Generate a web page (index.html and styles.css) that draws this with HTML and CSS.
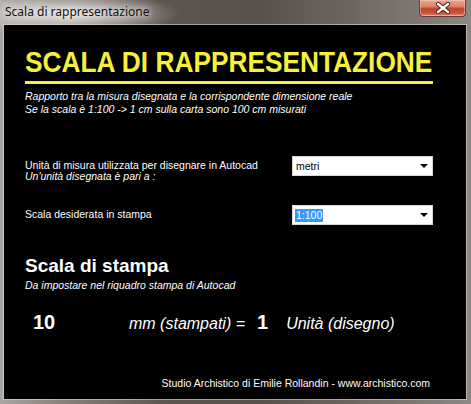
FILE: index.html
```html
<!DOCTYPE html>
<html lang="it">
<head>
<meta charset="utf-8">
<title>Scala di rappresentazione</title>
<link rel="stylesheet" href="styles.css">
</head>
<body>
<div class="window">
  <div class="titlebar">
    <span class="title">Scala di rappresentazione</span>
    <div class="close">
      <svg width="16" height="12" viewBox="0 0 16 12">
        <path d="M3 2 L13 10 M13 2 L3 10" stroke="#4a1a12" stroke-width="4.2" stroke-linecap="round"/>
        <path d="M3 2 L13 10 M13 2 L3 10" stroke="#ffffff" stroke-width="2.4" stroke-linecap="round"/>
      </svg>
    </div>
  </div>
  <div class="client">
    <h1 class="heading"><span class="heading-text">SCALA DI RAPPRESENTAZIONE</span></h1>
    <div class="intro">
      <div>Rapporto tra la misura disegnata e la corrispondente dimensione reale</div>
      <div>Se la scala è 1:100 -&gt; 1 cm sulla carta sono 100 cm misurati</div>
    </div>
    <div class="form">
      <div class="label">
        <div>Unità di misura utilizzata per disegnare in Autocad</div>
        <div class="it">Un'unità disegnata è pari a :</div>
      </div>
      <div class="combo"><span class="combo-value">metri</span><span class="arrow"></span></div>
      <div class="label">
        <div>Scala desiderata in stampa</div>
      </div>
      <div class="combo"><span class="combo-value selected">1:100</span><span class="arrow"></span></div>
    </div>
    <h2 class="subheading">Scala di stampa</h2>
    <div class="note">Da impostare nel riquadro stampa di Autocad</div>
    <div class="result">
      <span class="num num-mm">10</span>
      <span class="unit">mm (stampati) =</span>
      <span class="num num-units">1</span>
      <span class="unit unit-last">Unità (disegno)</span>
    </div>
    <div class="footer">Studio Archistico di Emilie Rollandin - www.archistico.com</div>
  </div>
</div>
</body>
</html>
```

FILE: styles.css
```css
html, body {
  margin: 0;
  padding: 0;
}

body {
  width: 471px;
  height: 404px;
  overflow: hidden;
  font-family: "Liberation Sans", Arial, sans-serif;
}

.window {
  width: 471px;
  height: 404px;
  box-sizing: border-box;
  padding: 0 5px 5px 4px;
  display: flex;
  flex-direction: column;
  background:
    radial-gradient(ellipse 110px 22px at 70px 14px, rgba(255,255,255,0.75), rgba(255,255,255,0) 100%),
    linear-gradient(90deg, #a9a6a3 0%, #8b837d 12%, #5f5550 35%, #5a504a 55%, #6e6661 75%, #8d8884 100%);
}

.titlebar {
  height: 25px;
  display: flex;
  align-items: flex-start;
  position: relative;
}

.title {
  font-family: "Noto Sans", "Open Sans", sans-serif;
  font-size: 12px;
  line-height: 16px;
  margin: 4px 0 0 1px;
  color: #111;
  text-shadow: 0 0 6px rgba(255,255,255,0.9), 0 0 10px rgba(255,255,255,0.8);
}

.close {
  margin-left: auto;
  margin-right: 0;
  width: 47px;
  height: 17px;
  box-sizing: border-box;
  border: 1px solid #6b3a30;
  border-top: none;
  border-radius: 0 0 4px 4px;
  background: linear-gradient(180deg, #e6a894 0%, #d9826b 40%, #c0402a 55%, #c8533b 80%, #dc8a6e 100%);
  box-shadow: inset 0 0 0 1px rgba(255,220,210,0.45);
  display: flex;
  align-items: center;
  justify-content: center;
}

.client {
  flex: 1;
  background: #000;
  box-shadow: 0 0 0 1px rgba(230,226,222,0.55);
  padding: 0 36px 9px 21px;
  display: flex;
  flex-direction: column;
  color: #fff;
  min-height: 0;
}

.heading {
  margin: 22px 0 0 0;
  width: 408px;
  padding-bottom: 4px;
  border-bottom: 3px solid #f5f03a;
  font-size: 30px;
  line-height: 30px;
  font-weight: bold;
  color: #f5f03a;
  white-space: nowrap;
}

.heading-text {
  display: inline-block;
  transform: scaleX(0.876);
  transform-origin: 0 0;
}

.intro {
  margin-top: 6px;
  font-size: 10.5px;
  line-height: 13px;
  font-style: italic;
}

.form {
  margin-top: 40px;
  display: grid;
  grid-template-columns: 267px 141px;
  row-gap: 23px;
  align-items: start;
}

.label {
  margin-top: 4px;
  font-size: 10.5px;
  line-height: 11px;
}

.it {
  font-style: italic;
}

.combo {
  height: 20px;
  box-sizing: border-box;
  background: #fff;
  border: 1px solid #d6d6d6;
  display: flex;
  align-items: center;
  padding-left: 2px;
  position: relative;
  color: #000;
  font-size: 10.5px;
}

.combo-value {
  line-height: 13px;
  padding: 0 1px;
}

.combo-value.selected {
  background: #3399ff;
  color: #fff;
}

.arrow {
  margin-left: auto;
  margin-right: 4px;
  width: 0;
  height: 0;
  border-left: 4px solid transparent;
  border-right: 4px solid transparent;
  border-top: 4px solid #000;
}

.subheading {
  margin: 30px 0 0 0;
  font-size: 19px;
  line-height: 22px;
  font-weight: bold;
}

.note {
  margin-top: 2px;
  font-size: 10.5px;
  line-height: 13px;
  font-style: italic;
}

.result {
  margin-top: 18px;
  display: flex;
  align-items: baseline;
  padding-left: 8px;
  line-height: 24px;
}

.num {
  font-size: 20px;
  font-weight: bold;
}

.num-mm {
  width: 96px;
}

.unit {
  font-size: 16px;
  font-style: italic;
}

.num-units {
  margin-left: 12px;
}

.unit-last {
  margin-left: 18px;
}

.footer {
  margin-top: auto;
  text-align: right;
  font-size: 10.5px;
  line-height: 13px;
}
```
